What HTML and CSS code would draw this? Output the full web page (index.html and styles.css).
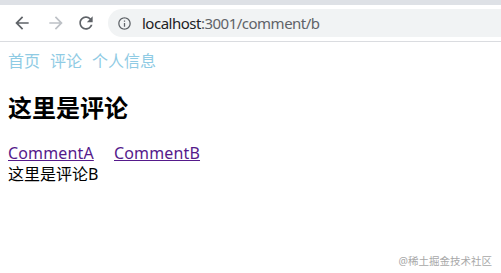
FILE: index.html
```html
<!DOCTYPE html>
<html lang="zh-CN">
<head>
    <meta charset="UTF-8">
    <meta name="viewport" content="width=device-width, initial-scale=1.0">
    <title>评论</title>
    <link rel="stylesheet" href="styles.css">
</head>
<body>

    <div class="browser-top"></div>
    <div class="toolbar">
        <span class="tool-btn back">
            <svg viewBox="0 0 24 24" width="20" height="20"><path d="M20 11H7.83l5.59-5.59L12 4l-8 8 8 8 1.41-1.41L7.83 13H20v-2z"/></svg>
        </span>
        <span class="tool-btn forward">
            <svg viewBox="0 0 24 24" width="20" height="20"><path d="M12 4l-1.41 1.41L16.17 11H4v2h12.17l-5.58 5.59L12 20l8-8z"/></svg>
        </span>
        <span class="tool-btn reload">
            <svg viewBox="0 0 24 24" width="20" height="20"><path d="M17.65 6.35C16.2 4.9 14.21 4 12 4c-4.42 0-7.99 3.58-7.99 8s3.57 8 7.99 8c3.73 0 6.84-2.55 7.73-6h-2.08c-.82 2.33-3.04 4-5.65 4-3.31 0-6-2.69-6-6s2.69-6 6-6c1.66 0 3.14.69 4.22 1.78L13 11h7V4l-2.35 2.35z"/></svg>
        </span>
        <div class="address-bar">
            <svg class="info-icon" viewBox="0 0 24 24" width="15" height="15"><path d="M11 7h2v2h-2zm0 4h2v6h-2zm1-9C6.48 2 2 6.48 2 12s4.48 10 10 10 10-4.48 10-10S17.52 2 12 2zm0 18c-4.41 0-8-3.59-8-8s3.59-8 8-8 8 3.59 8 8-3.59 8-8 8z"/></svg>
            <span class="url"><span class="host">localhost</span>:3001/comment/b</span>
        </div>
    </div>

    <div class="page">
        <nav class="nav">
            <a href="#">首页</a>
            <a href="#">评论</a>
            <a href="#">个人信息</a>
        </nav>

        <h1>这里是评论</h1>

        <div class="comment-links">
            <a href="#">CommentA</a>
            <a href="#">CommentB</a>
        </div>
        <div class="comment-body">这里是评论B</div>
    </div>

    <div class="watermark">@稀土掘金技术社区</div>

</body>
</html>
```

FILE: styles.css
```css
* {
    box-sizing: border-box;
}

body {
    margin: 0;
    padding: 0;
    width: 501px;
    height: 273px;
    overflow: hidden;
    position: relative;
    background: white;
    font-family: 'Noto Sans', 'Noto Sans CJK SC', sans-serif;
}

.browser-top {
    height: 5px;
    background: #dee1e6;
}

.toolbar {
    height: 37px;
    display: flex;
    align-items: flex-start;
    padding: 4px 0 0 7px;
    border-bottom: 1px solid #dadce0;
    overflow: hidden;
}

.tool-btn {
    width: 30px;
    height: 28px;
    display: flex;
    justify-content: center;
    align-items: center;
    fill: #5f6368;
}

.tool-btn.back {
    margin-right: 4px;
}

.tool-btn.forward {
    fill: #bdc1c6;
}

.tool-btn.reload {
    margin-right: 7px;
}

.address-bar {
    flex: 1;
    height: 28px;
    margin-right: -30px;
    border-radius: 14px;
    background: #f1f3f4;
    display: flex;
    align-items: center;
    padding-left: 9px;
}

.info-icon {
    fill: #5f6368;
    margin-right: 10px;
}

.url {
    font-size: 15px;
    color: #5f6368;
    letter-spacing: -0.5px;
}

.url .host {
    color: #202124;
}

.page {
    padding: 9px 8px 0 8px;
}

.nav {
    display: flex;
    gap: 10px;
    font-size: 16px;
    line-height: 20px;
}

.nav a {
    color: #8fcbe4;
    text-decoration: none;
}

h1 {
    margin: 23px 0 21px 0;
    font-size: 24px;
    line-height: 28px;
    font-weight: bold;
    color: black;
}

.comment-links {
    font-size: 16px;
    line-height: 21px;
}

.comment-links a {
    color: #551a8b;
    margin-right: 16px;
    letter-spacing: 0.15px;
}

.comment-body {
    font-size: 16px;
    line-height: 21px;
    color: black;
}

.watermark {
    position: absolute;
    right: 9px;
    bottom: 5px;
    font-size: 10.5px;
    line-height: 13px;
    color: #a8a8a8;
}
```
